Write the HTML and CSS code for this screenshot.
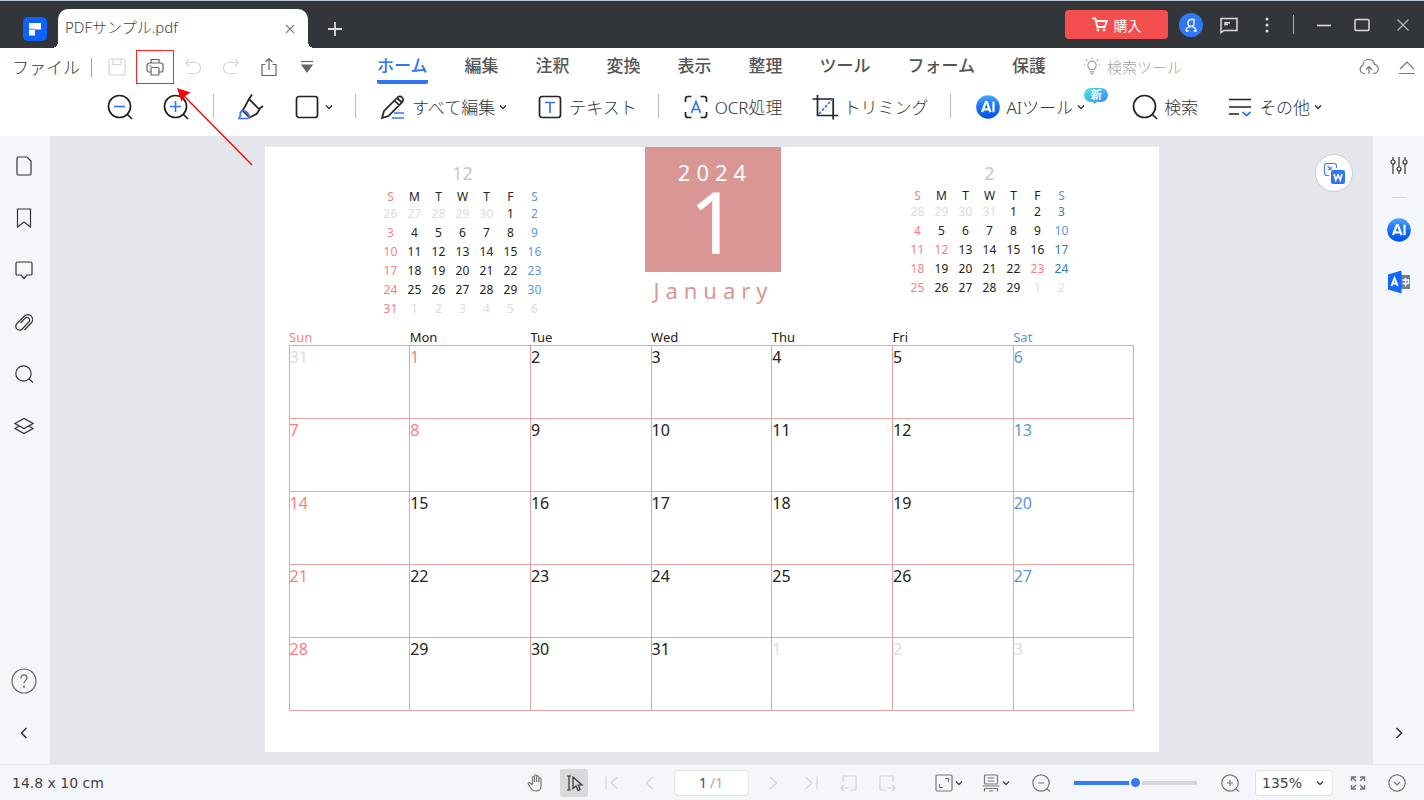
FILE: index.html
```html
<!DOCTYPE html>
<html lang="ja">
<head>
<meta charset="utf-8">
<meta name="viewport" content="width=device-width, initial-scale=1">
<title>PDFサンプル.pdf</title>
<link rel="stylesheet" href="styles.css">
</head>
<body>
<svg width="0" height="0" class="defs" aria-hidden="true">
  <defs>
    <linearGradient id="ai-fill" x1="0" y1="0" x2="0" y2="1"><stop offset="0" stop-color="#46a6fb"/><stop offset=".5" stop-color="#1a6ff5"/><stop offset="1" stop-color="#0052e6"/></linearGradient>
    <linearGradient id="new-fill" x1="0" y1="0" x2="1" y2="1"><stop offset="0" stop-color="#5be6dc"/><stop offset="1" stop-color="#2c83f8"/></linearGradient>
    <symbol id="chev" viewBox="0 0 10 10"><path d="M2 3.5l3 3 3-3"/></symbol>
    <symbol id="ai" viewBox="0 0 24 24"><circle cx="12" cy="12" r="11.8" fill="url(#ai-fill)" stroke="none"/><path d="M6 17.200L9.800 7h1l3.800 10.200M7.200 14.300h6M17.500 6.800v10.400" stroke="#fff" stroke-width="2.2"/></symbol>
  </defs>
</svg>

<header class="titlebar">
  <svg class="logo" viewBox="0 0 24 24" aria-hidden="true"><rect width="24" height="24" rx="5" fill="#0a62ff" stroke="none"/><path fill="#fff" stroke="none" d="M6 6h12v6.500h-6v6H6z"/><path d="M6 12.200h6" stroke="#0a62ff" stroke-width=".8"/></svg>
  <div class="doc-tab">
    <span>PDFサンプル.pdf</span>
    <button class="icon-btn tab-close" aria-label="タブを閉じる"><svg viewBox="0 0 10 10" width="10" height="10"><path d="M1 1l8 8M9 1l-8 8"/></svg></button>
  </div>
  <button class="icon-btn add-tab" aria-label="新しいタブ"><svg viewBox="0 0 14 14" width="14" height="14"><path d="M7 0v14M0 7h14" stroke-width="1.800"/></svg></button>
  <div class="window-tools">
    <button class="buy"><svg viewBox="0 0 16 16" width="16" height="16"><path d="M.5 1.500h2.800l2 8.500h7.500l1.900-6H4.200" stroke-width="1.800"/><circle cx="6" cy="13" r="1.400" fill="currentColor" stroke="none"/><circle cx="12" cy="13" r="1.400" fill="currentColor" stroke="none"/></svg>購入</button>
    <button class="avatar" aria-label="アカウント"><svg viewBox="0 0 16 16" width="16" height="16"><path d="M5 4.500l2-2h4v3.800a3 3 0 01-6 0zM3 14c.2-3 2-4.300 5-4.300s4.800 1.300 5 4.300h-2.500M3 14h2.500" stroke-width="1.300"/></svg></button>
    <button class="icon-btn" aria-label="メッセージ"><svg viewBox="0 0 18 18" width="18" height="18"><path d="M1 16.500V2.500h16v12H4zM5 9.500V6.700h5M5 8.500h3" stroke-width="1.500"/></svg></button>
    <button class="icon-btn" aria-label="メニュー"><svg viewBox="0 0 18 18" width="18" height="18"><g fill="currentColor" stroke="none"><circle cx="9" cy="3" r="1.500"/><circle cx="9" cy="9" r="1.500"/><circle cx="9" cy="15" r="1.500"/></g></svg></button>
    <span class="bar"></span>
    <button class="icon-btn" aria-label="最小化"><svg viewBox="0 0 18 18" width="18" height="18"><path d="M2 9.500h14" stroke-width="1.600"/></svg></button>
    <button class="icon-btn" aria-label="最大化"><svg viewBox="0 0 18 18" width="18" height="18"><rect x="2" y="3.500" width="14" height="11" rx="1" stroke-width="1.500"/></svg></button>
    <button class="icon-btn win-close" aria-label="閉じる"><svg viewBox="0 0 18 18" width="18" height="18"><path d="M3.500 3.500l11 11M14.500 3.500l-11 11"/></svg></button>
  </div>
</header>

<nav class="menubar">
  <button class="file-menu">ファイル</button>
  <span class="bar"></span>
  <div class="quick">
    <button class="quick-btn off" aria-label="保存"><svg viewBox="0 0 18 18" width="18" height="18"><rect x="1" y="1" width="16" height="16" rx="2"/><path d="M5 1v5.500h8V1M9.500 3h1"/></svg></button>
    <button class="quick-btn marked" aria-label="印刷"><svg viewBox="0 0 18 18" width="18" height="18"><path d="M5 5V1.500h8V5M5 14H3a2 2 0 01-2-2V7.500A2.500 2.500 0 013.500 5h11A2.500 2.500 0 0117 7.500V12a2 2 0 01-2 2h-2M3.500 8h2"/><rect x="5" y="9.500" width="8" height="7.500" rx="1"/></svg>
      <svg class="arrow" viewBox="0 0 76 78" width="76" height="78" aria-hidden="true"><path d="M75 77L6 7" stroke="#f00" stroke-width="1.400"/><path d="M0 0l13.500 4.500-5.500 3.500-3.500 5.500z" fill="#f00" stroke="none"/></svg></button>
    <button class="quick-btn off" aria-label="元に戻す"><svg viewBox="0 0 18 18" width="18" height="18"><path d="M5 1L1.500 4.500 5 8M1.500 4.500H11a5.500 5.500 0 010 11H4"/></svg></button>
    <button class="quick-btn off" aria-label="やり直し"><svg viewBox="0 0 18 18" width="18" height="18"><path d="M13 1l3.500 3.500L13 8M16.500 4.500H7a5.500 5.500 0 000 11h7"/></svg></button>
    <button class="quick-btn" aria-label="共有"><svg viewBox="0 0 18 18" width="18" height="18"><path d="M5.500 6.500H2v11h14v-11h-3.500M9 12V1M5.500 4L9 .7 12.500 4"/></svg></button>
    <button class="quick-btn" aria-label="カスタマイズ"><svg viewBox="0 0 18 18" width="18" height="18"><path d="M3 3.500h12"/><path d="M4 7h10l-5 7z" fill="currentColor"/></svg></button>
  </div>
  <div class="tabs">
    <a href="#home" class="active">ホーム</a><a href="#edit">編集</a><a href="#comment">注釈</a><a href="#convert">変換</a><a href="#view">表示</a><a href="#organize">整理</a><a href="#tools">ツール</a><a href="#form">フォーム</a><a href="#protect">保護</a>
  </div>
  <button class="find-tool"><svg viewBox="0 0 18 18" width="18" height="18"><path d="M6.500 12.500c0-1.500-1.700-2-1.700-4.200a4.200 4.200 0 018.400 0c0 2.200-1.700 2.700-1.700 4.200zM6.500 14.800h5M7.500 16.800h3M9 .5v1.500M1 8h1.500M15.500 8H17M3 2.500l1.300 1.300M15 2.500l-1.300 1.300"/></svg>検索ツール</button>
  <div class="menubar-end">
    <button class="icon-btn" aria-label="クラウド"><svg viewBox="0 0 20 18" width="20" height="18"><path d="M6 15.500H5a4.300 4.300 0 01-1-8.300C4 3.800 6.500 1.500 9.700 1.500c3 0 5.300 2 5.800 4.800 2.200.5 3.700 2.200 3.700 4.500a4.700 4.700 0 01-4.500 4.700H14M10 16V9M7 11.500L10 8.500l3 3"/></svg></button>
    <button class="icon-btn" aria-label="折りたたむ"><svg viewBox="0 0 18 18" width="18" height="18"><path d="M2 11l7-7 7 7M1 15.500h16"/></svg></button>
  </div>
</nav>

<div class="toolbar" role="toolbar">
  <div class="group">
    <button class="tool" aria-label="縮小"><svg viewBox="0 0 28 28"><circle cx="13.500" cy="13.500" r="11"/><path d="M21 21l5 5"/><path class="blue" d="M8 13.500h11"/></svg></button>
    <button class="tool" aria-label="拡大"><svg viewBox="0 0 28 28"><circle cx="13.500" cy="13.500" r="11"/><path d="M21 21l5 5"/><path class="blue" d="M8 13.500h11M13.500 8v11"/></svg></button>
  </div>
  <div class="group after-zoom">
    <button class="tool" aria-label="ハイライト"><svg viewBox="0 0 28 28"><path d="M15 1.500l-3 4.500M26 13l-4 3M12 6l-4 7.500-2.500 4 7 7L19.500 21l3-4.500zM12 6l10.500 10.500"/><path class="blue" d="M5.500 17.500c-1.500 1-3 2.500-2 4.500l-1.500 3.500h8l2.500-1c-.5-4-3-6.500-7-7z"/></svg></button>
    <button class="tool" aria-label="図形"><svg viewBox="0 0 28 28"><rect x="3.500" y="3.500" width="21" height="21" rx="2.500"/></svg><svg class="chev"><use href="#chev"/></svg></button>
  </div>
  <div class="group">
    <button class="tool"><svg viewBox="0 0 28 28"><path d="M3 25l2-7L18.500 4.500a3.200 3.200 0 014.700 0 3.200 3.200 0 010 4.600L9.500 23zM15.500 7.500l5 5M18 5l5 4.500"/><path class="blue" d="M15 20h10M13 25h12"/></svg>すべて編集<svg class="chev"><use href="#chev"/></svg></button>
    <button class="tool"><svg viewBox="0 0 28 28"><rect x="3.500" y="3.500" width="21" height="21" rx="2.500"/><path class="blue" d="M9 9.500h10M14 9.500V20"/></svg>テキスト</button>
  </div>
  <div class="group">
    <button class="tool"><svg viewBox="0 0 28 28"><path d="M3.500 9V6A2.500 2.500 0 016 3.500h3.500M18.500 3.500H22A2.500 2.500 0 0124.500 6v3M24.500 19v3a2.500 2.500 0 01-2.500 2.500h-3.500M9.500 24.500H6A2.500 2.500 0 013.500 22v-3"/><path class="blue" d="M9.500 20L14 8.500 18.500 20M11 16.500h6"/></svg>OCR処理</button>
    <button class="tool"><svg viewBox="0 0 28 28"><path d="M6.500 2v20.500H27M1.500 6h20.700v20.500"/><path class="blue" stroke-dasharray="3 1.500" d="M8 21L22 5.500"/></svg>トリミング</button>
  </div>
  <div class="group">
    <button class="tool"><svg viewBox="-2 -2 28 28"><use href="#ai" width="24" height="24"/></svg>AIツール<svg class="chev"><use href="#chev"/></svg><span class="new"><svg viewBox="0 0 24 18" aria-hidden="true"><path fill="url(#new-fill)" stroke="none" d="M7 1h10a7 7 0 010 14h-4l-2.500 2L9 15H7A7 7 0 017 1z"/></svg><b>新</b></span></button>
    <button class="tool"><svg viewBox="0 0 28 28"><circle cx="13.500" cy="13.500" r="11"/><path d="M21 21l5 5"/></svg>検索</button>
    <button class="tool"><svg viewBox="0 0 28 28"><path d="M3 6.500h22M3 14h22M3 21h10"/><path class="blue" d="M16.500 19l4 3.500 4-3.500"/></svg>その他<svg class="chev"><use href="#chev"/></svg></button>
  </div>
</div>

<main class="body">
  <aside class="rail">
    <button class="icon-btn" aria-label="サムネイル"><svg viewBox="0 0 20 20"><path d="M4.500 1h8.500l4 4v12.500a1.500 1.500 0 01-1.500 1.500h-11A1.500 1.500 0 013 17.500v-15A1.500 1.500 0 014.500 1z"/></svg></button>
    <button class="icon-btn" aria-label="ブックマーク"><svg viewBox="0 0 20 20"><path d="M3.500 1h13v18L10 14l-6.500 5z"/></svg></button>
    <button class="icon-btn" aria-label="コメント"><svg viewBox="0 0 20 20"><path d="M3.500 2h13A1.500 1.500 0 0118 3.500V14a1 1 0 01-1 1h-4l-3 3.500L7 15H3a1 1 0 01-1-1V3.500A1.500 1.500 0 013.500 2z"/></svg></button>
    <button class="icon-btn" aria-label="添付ファイル"><svg viewBox="0 0 20 20"><path d="M10.500 18l6.700-7a5 5 0 00.300-6.700 4.800 4.800 0 00-7-.3L3 11.500a4 4 0 00-.2 5.300 3.800 3.800 0 005.500.2l6.500-7a2.600 2.600 0 00-3.600-3.800L6.500 11"/></svg></button>
    <button class="icon-btn" aria-label="検索"><svg viewBox="0 0 20 20"><circle cx="9.500" cy="9.500" r="7.700"/><path d="M15 15l4 3.500"/></svg></button>
    <button class="icon-btn" aria-label="レイヤー"><svg viewBox="0 0 20 20"><path d="M1 7.500l9-5 9 5-9 5zM5 10l-4 2.500 9 5 9-5-4-2.500"/></svg></button>
    <span class="push"></span>
    <button class="icon-btn help" aria-label="ヘルプ"><svg viewBox="0 0 26 26" width="26" height="26"><circle cx="13" cy="13" r="12"/><path d="M10 10.500V9.800a3 3 0 016 0c0 2.500-3 2.700-3 5.500"/><circle cx="13" cy="18.700" r="1" fill="currentColor" stroke="none"/></svg></button>
    <button class="icon-btn" aria-label="パネルを隠す"><svg viewBox="0 0 20 20"><path d="M12.500 5l-5 5 5 5" stroke-width="1.500"/></svg></button>
  </aside>

  <section class="workspace">
    <article class="page">
      <div class="page-head">
        <table class="mini mini-prev"><caption>12</caption>
          <thead><tr><th>S</th><th>M</th><th>T</th><th>W</th><th>T</th><th>F</th><th>S</th></tr></thead>
          <tbody>
          <tr><td class="dim">26</td><td class="dim">27</td><td class="dim">28</td><td class="dim">29</td><td class="dim">30</td><td>1</td><td>2</td></tr>
          <tr><td>3</td><td>4</td><td>5</td><td>6</td><td>7</td><td>8</td><td>9</td></tr>
          <tr><td>10</td><td>11</td><td>12</td><td>13</td><td>14</td><td>15</td><td>16</td></tr>
          <tr><td>17</td><td>18</td><td>19</td><td>20</td><td>21</td><td>22</td><td>23</td></tr>
          <tr><td>24</td><td>25</td><td>26</td><td>27</td><td>28</td><td>29</td><td>30</td></tr>
          <tr><td>31</td><td class="dim">1</td><td class="dim">2</td><td class="dim">3</td><td class="dim">4</td><td class="dim">5</td><td class="dim">6</td></tr>
          </tbody></table>
        <div class="month">
          <div class="month-box"><div class="year">2024</div><div class="num">1</div></div>
          <div class="month-name">January</div>
        </div>
        <table class="mini mini-next"><caption>2</caption>
          <thead><tr><th>S</th><th>M</th><th>T</th><th>W</th><th>T</th><th>F</th><th>S</th></tr></thead>
          <tbody>
          <tr><td class="dim">28</td><td class="dim">29</td><td class="dim">30</td><td class="dim">31</td><td>1</td><td>2</td><td class="deep">3</td></tr>
          <tr><td>4</td><td>5</td><td>6</td><td>7</td><td>8</td><td>9</td><td>10</td></tr>
          <tr><td>11</td><td class="red">12</td><td>13</td><td>14</td><td>15</td><td>16</td><td class="deep">17</td></tr>
          <tr><td>18</td><td>19</td><td>20</td><td>21</td><td>22</td><td class="red">23</td><td class="deep">24</td></tr>
          <tr><td>25</td><td>26</td><td>27</td><td>28</td><td>29</td><td class="dim">1</td><td class="dim">2</td></tr>
          </tbody></table>
      </div>
      <table class="big">
        <thead><tr><th>Sun</th><th>Mon</th><th>Tue</th><th>Wed</th><th>Thu</th><th>Fri</th><th>Sat</th></tr></thead>
        <tbody>
        <tr><td class="dim">31</td><td class="red">1</td><td>2</td><td>3</td><td>4</td><td>5</td><td>6</td></tr>
        <tr><td>7</td><td class="red">8</td><td>9</td><td>10</td><td>11</td><td>12</td><td>13</td></tr>
        <tr><td>14</td><td>15</td><td>16</td><td>17</td><td>18</td><td>19</td><td>20</td></tr>
        <tr><td>21</td><td>22</td><td>23</td><td>24</td><td>25</td><td>26</td><td>27</td></tr>
        <tr><td>28</td><td>29</td><td>30</td><td>31</td><td class="dim">1</td><td class="dim">2</td><td class="dim">3</td></tr>
        </tbody>
      </table>
    </article>
    <button class="to-word" aria-label="Wordに変換"><svg viewBox="0 0 24 24" width="24" height="24"><path d="M7 14.500H5A2.500 2.500 0 012.500 12V5A2.500 2.500 0 015 2.500h7A2.500 2.500 0 0114.500 5v2M5.500 5l3.500 3.500M9 5.500v3H6" stroke="#3f7df6" stroke-width="1.200"/><rect x="9" y="9" width="14" height="14" rx="2" fill="#2f74f5" stroke="none"/><path d="M12 13l1.800 6L16 14l2.200 5L20 13" stroke="#fff" stroke-width="1.700"/></svg></button>
  </section>

  <aside class="rail rail-right">
    <button class="icon-btn" aria-label="設定"><svg viewBox="0 0 20 20"><path d="M4 1v3M4 8v10M10 1v10M10 15v3M16 1v3M16 8v10"/><circle cx="4" cy="6" r="2"/><circle cx="10" cy="13" r="2"/><circle cx="16" cy="6" r="2"/></svg></button>
    <span class="dash"></span>
    <button class="icon-btn" aria-label="AI"><svg class="large" viewBox="0 0 24 24"><use href="#ai"/></svg></button>
    <button class="icon-btn" aria-label="翻訳"><svg class="large" viewBox="0 0 24 24"><path fill="#6f7f96" stroke="none" d="M12 5h11v14H12z"/><path fill="#1268fa" stroke="none" d="M1 4.500L14.500.5v23L1 19.500z"/><path d="M4.500 16L7.500 8l3.300 8M5.500 13.500h4" stroke="#fff" stroke-width="1.800"/><path d="M15.500 10h6v3.500h-6M18.500 8v8.500" stroke="#fff" stroke-width="1.400"/></svg></button>
    <span class="push"></span>
    <button class="icon-btn" aria-label="パネルを開く"><svg viewBox="0 0 20 20"><path d="M7.500 5l5 5-5 5" stroke-width="1.500"/></svg></button>
  </aside>
</main>

<footer class="status">
  <span class="size">14.8 x 10 cm</span>
  <div class="pager">
    <button class="icon-btn" aria-label="手のひら"><svg viewBox="0 0 20 20"><path d="M6.500 11V4.500c0-1.700 2-1.700 2 0V9 3c0-1.700 2.200-1.700 2.200 0v6-5c0-1.700 2.200-1.700 2.200 0v5.500V6c0-1.700 2.100-1.700 2.100 0v6.500c0 3.500-2 5.500-5 5.500-3.500 0-4.500-1.500-7.500-6.500-1-1.700 1-2.300 2-1.200L6.500 12"/></svg></button>
    <button class="icon-btn selected" aria-label="選択"><svg viewBox="0 0 20 20"><path d="M3 3h4M3 17h4M5 3v14M9 4v11.500l3-2.500 2 4.500 2.200-1-2-4.500H18z"/></svg></button>
    <button class="icon-btn off" aria-label="最初のページ"><svg viewBox="0 0 20 20"><path d="M4 3.500v13M15.500 4l-6.500 6 6.500 6"/></svg></button>
    <button class="icon-btn off" aria-label="前のページ"><svg viewBox="0 0 20 20"><path d="M13 4l-6.500 6 6.500 6"/></svg></button>
    <label class="page-box"><input type="text" value="1" aria-label="ページ"><span>/1</span></label>
    <button class="icon-btn off" aria-label="次のページ"><svg viewBox="0 0 20 20"><path d="M7 4l6.500 6-6.500 6"/></svg></button>
    <button class="icon-btn off" aria-label="最後のページ"><svg viewBox="0 0 20 20"><path d="M16 3.500v13M4.500 4l6.500 6-6.500 6"/></svg></button>
    <button class="icon-btn off" aria-label="前のビュー"><svg viewBox="0 0 20 20"><path d="M4 9V3h13v14h-6M9 15H2M5 12l-3 3 3 3"/></svg></button>
    <button class="icon-btn off" aria-label="次のビュー"><svg viewBox="0 0 20 20"><path d="M16 9V3H3v14h6M11 15h7M15 12l3 3-3 3"/></svg></button>
  </div>
  <div class="zoomer">
    <button class="icon-btn drop" aria-label="ページに合わせる"><svg viewBox="0 0 20 20"><rect x="2" y="2" width="16" height="16" rx="1.500"/><path d="M11 5.500h3.500V9M5.500 11v3.500H9"/></svg><svg class="chev"><use href="#chev"/></svg></button>
    <button class="icon-btn drop" aria-label="表示モード"><svg viewBox="0 0 20 20"><rect x="3.500" y="2" width="13" height="9" rx="1"/><path d="M6.500 5h7M6.500 8h7M1.500 13h17M3.500 18.500v-3h13v3M8 18h4"/></svg><svg class="chev"><use href="#chev"/></svg></button>
    <button class="icon-btn" aria-label="縮小"><svg viewBox="0 0 20 20"><circle cx="10" cy="10" r="8.200"/><path d="M7 10h6M15.500 15.500l3.500 3"/></svg></button>
    <input class="slider" type="range" min="0" max="100" value="50" aria-label="ズーム">
    <button class="icon-btn" aria-label="拡大"><svg viewBox="0 0 20 20"><circle cx="10" cy="10" r="8.200"/><path d="M7 10h6M10 7v6M15.500 15.500l3.500 3"/></svg></button>
    <label class="percent"><select aria-label="倍率"><option>135%</option></select><svg class="chev"><use href="#chev"/></svg></label>
    <button class="icon-btn" aria-label="全画面"><svg viewBox="0 0 20 20"><path d="M3.500 8V4H8M4 4l4 4M16.500 8V4H12M16 4l-4 4M3.500 12v4H8M4 16l4-4M16.500 12v4H12M16 16l-4-4" stroke-width="1.500"/></svg></button>
    <button class="icon-btn" aria-label="その他"><svg viewBox="0 0 20 20"><circle cx="10" cy="10" r="8.200"/><path d="M7 9l3 3 3-3"/></svg></button>
  </div>
</footer>
</body>
</html>
```

FILE: styles.css
```css
* { box-sizing: border-box; }

body {
  margin: 0;
  min-height: 100vh;
  display: flex;
  flex-direction: column;
  background: #fff;
  color: #333;
  font-family: "Noto Sans", "Noto Sans CJK JP", sans-serif;
  font-size: 17px;
}

button, input, select { font: inherit; color: inherit; }
button {
  border: 0;
  padding: 0;
  background: none;
  display: flex;
  align-items: center;
  white-space: nowrap;
}
a { color: inherit; text-decoration: none; }
svg {
  display: block;
  flex: none;
  fill: none;
  stroke: currentColor;
  stroke-width: 1.2;
}
.defs { position: absolute; }
.chev { width: 10px; height: 10px; stroke-width: 1.3; }
.icon-btn { width: 28px; height: 28px; justify-content: center; flex: none; }

/* title bar */
.titlebar {
  display: flex;
  align-items: center;
  height: 48px;
  padding: 0 7px 0 23px;
  background: #323639;
  border-top: 1px solid #b9c6d6;
  color: #dcdcdc;
}
.logo { width: 24px; height: 24px; margin: 8px 11px 0 0; }
.doc-tab {
  position: relative;
  align-self: flex-end;
  display: flex;
  align-items: center;
  justify-content: space-between;
  width: 250px;
  height: 39px;
  padding: 0 4px 4px 7px;
  border-radius: 10px 10px 0 0;
  background: #fff;
  color: #444;
  font-size: 15px;
  font-weight: 300;
}
.doc-tab::before, .doc-tab::after {
  content: "";
  position: absolute;
  bottom: 0;
  width: 6px;
  height: 6px;
}
.doc-tab::before { right: 100%; background: radial-gradient(circle at 0 0, transparent 6px, #fff 6px); }
.doc-tab::after { left: 100%; background: radial-gradient(circle at 100% 0, transparent 6px, #fff 6px); }
.tab-close { color: #77809a; margin-top: 4px; }
.add-tab { margin: 8px 0 0 13px; }
.window-tools { display: flex; align-items: center; gap: 10px; margin-left: auto; }
.buy {
  width: 103px;
  height: 29px;
  gap: 6px;
  margin-right: 1px;
  justify-content: center;
  border-radius: 4px;
  background: #f54e4e;
  color: #fff;
  font-size: 14px;
}
.avatar { width: 24px; height: 24px; margin-right: 2px; border-radius: 50%; background: #2f78f7; color: #fff; justify-content: center; }
.window-tools .bar { height: 19px; margin: 0 6px 0 2px; }
.win-close { margin-left: 3px; color: #b4b8c2; }
.bar { width: 1px; background: #a5adc0; flex: none; }

/* menu row */
.menubar {
  display: flex;
  align-items: center;
  height: 38px;
  padding: 0 3px 0 12px;
}
.file-menu { color: #333; font-weight: 300; margin-bottom: 2px; }
.menubar > .bar { height: 19px; margin: 0 6px 0 11px; background: #9ba3bb; }
.quick { display: flex; }
.quick-btn {
  position: relative;
  width: 38px;
  height: 34px;
  justify-content: center;
  color: #666;
}
.off { color: #d2d4d8; }
.marked { border: 1px solid #f22; }
.arrow { position: absolute; left: 40px; top: 37px; z-index: 2; }
.tabs { display: flex; align-self: stretch; gap: 37px; margin-left: 51px; }
.tabs a {
  display: flex;
  align-items: center;
  height: 36px;
  border-bottom: 4px solid transparent;
  color: #555;
  font-weight: 500;
  white-space: nowrap;
}
.tabs .active { color: #2f74f5; border-bottom-color: #2f74f5; border-radius: 0 0 2px 2px; }
.find-tool { gap: 6px; margin: 0 0 2px 37px; color: #a3a3a3; font-size: 15px; font-weight: 300; }
.menubar-end { display: flex; gap: 10px; margin-left: auto; color: #777; }

/* tool row */
.toolbar {
  display: flex;
  align-items: center;
  height: 50px;
  padding: 0 0 10px 106px;
  color: #333;
  font-weight: 300;
}
.group { display: flex; gap: 28px; align-items: center; }
.group + .group {
  padding-left: 24px;
  margin-left: 21px;
  background: linear-gradient(#bbb, #bbb) left center / 1px 24px no-repeat;
}
.group + .after-zoom { margin-left: 23px; }
.tool > svg:first-child { width: 28px; height: 28px; margin: 2px 5px 0 0; stroke: #222; stroke-width: 1.7; }
.tool[aria-label] > svg:first-child { margin-right: 0; }
.tool .blue { stroke: #3775f6; }
.tool .chev { margin: 2px 0 0 3px; }
.new { position: relative; width: 24px; height: 18px; margin: 0 -5px 20px -2px; }
.new svg { width: 24px; height: 18px; }
.new b {
  position: absolute;
  inset: 0;
  color: #fff;
  font-size: 11px;
  font-weight: 700;
  line-height: 16px;
  text-align: center;
}

/* body */
.body { flex: 1; display: flex; }
.rail {
  display: flex;
  flex-direction: column;
  align-items: center;
  gap: 24px;
  width: 51px;
  padding: 16px 3px 17px 0;
  background: #f5f6fa;
  border-right: 1px solid #e2e4ea;
  color: #333;
}
.rail svg { width: 20px; height: 20px; }
.rail .help svg { width: 26px; height: 26px; color: #666; }
.rail .large { width: 24px; height: 24px; }
.rail-right { padding-right: 0; border-right: 0; }
.push { flex: 1; margin-top: -24px; }
.dash { width: 14px; height: 1px; margin: -7px 0 -6px; background: #d0d3da; }
.workspace {
  position: relative;
  flex: 1;
  display: flex;
  justify-content: center;
  align-items: flex-start;
  padding: 11px 0 12px;
  background: #e5e6ea;
}
.page {
  width: 67.7%;
  min-width: 760px;
  padding: 0 25px 41px 24px;
  background: #fff;
  color: #222;
}
.to-word {
  position: absolute;
  top: 18px;
  right: 20px;
  width: 38px;
  height: 38px;
  justify-content: center;
  border: 1px solid #c8cedf;
  border-radius: 50%;
  background: #fff;
}

/* calendar */
.page-head {
  display: grid;
  grid-template-columns: 90fr 168px 99fr 136px 124fr 168px 61fr;
  align-items: start;
  height: 182px;
}
.mini {
  width: 168px;
  margin-top: 14px;
  border-collapse: collapse;
  table-layout: fixed;
  font-size: 12px;
  line-height: 17px;
  text-align: center;
}
.mini caption { color: #c8c8c8; font-size: 18px; line-height: 24px; padding-bottom: 3px; }
.mini th, .big th { font-weight: 400; }
.mini th, .mini td { padding: 0 0 2px; }
.mini th { padding: 0; }
.mini-next th, .mini-next td { line-height: 16px; }
.mini-prev { grid-column: 2; }
.month { grid-column: 4; text-align: center; }
.mini-next { grid-column: 6; height: 110px; }
.month-box { height: 125px; padding-top: 11px; background: #d99694; color: #fff; }
.year { font-size: 22px; line-height: 28px; letter-spacing: 6px; padding-left: 3px; }
.num { font-size: 86px; line-height: 70px; }
.month-name { color: #d99694; font-size: 22px; line-height: 36px; letter-spacing: 6px; }
tr > :first-child, .red { color: #fa7f7f; }
tr > :last-child { color: #5e97d8; }
tr > .deep { color: #2f78cc; }
tr > .dim { color: #dcdcdc; }
tr > .red { color: #fa7f7f; }
.big {
  width: 100%;
  border-collapse: collapse;
  table-layout: fixed;
  text-align: left;
  font-size: 16px;
}
.big th { height: 16px; padding: 0; font-size: 13px; line-height: 16px; }
.big td {
  height: 73px;
  padding: 0;
  border: 1px solid #e2a3a2;
  line-height: 22px;
  vertical-align: top;
}

/* status bar */
.status {
  display: flex;
  align-items: center;
  height: 36px;
  padding: 0 13px 0 12px;
  background: #f5f6fa;
  border-top: 1px solid #e6e8ec;
  color: #777;
  font-size: 15px;
}
.size { color: #444; font-family: "DejaVu Sans", sans-serif; font-size: 14px; }
.status svg:not(.chev) { width: 20px; height: 20px; }
.pager { display: flex; align-items: center; gap: 10px; margin-left: auto; }
.zoomer { display: flex; align-items: center; gap: 11px; margin-left: 32px; }
.selected { background: #d8d9db; color: #333; border-radius: 2px; }
.page-box, .percent {
  display: flex;
  align-items: center;
  height: 26px;
  border: 1px solid #dfe1e6;
  border-radius: 4px;
  background: #fff;
}
.page-box { width: 75px; color: #aaa; font-size: 14px; gap: 3px; }
.page-box input { width: 32px; padding: 0; border: 0; background: none; color: #3c4468; text-align: right; }
.drop { width: 31px; margin-right: 5px; }
.drop .chev { color: #444; }
.slider {
  appearance: none;
  width: 123px;
  height: 13px;
  margin: 0 8px;
  background: linear-gradient(90deg, #3579f8 50%, #d0d5df 50%) center / 100% 4px no-repeat;
}
.slider::-webkit-slider-thumb {
  appearance: none;
  width: 13px;
  height: 13px;
  border: 2px solid #f5f6fa;
  border-radius: 50%;
  background: #3579f8;
}
.percent { width: 78px; padding: 0 7px 0 6px; color: #444; font-family: "DejaVu Sans", sans-serif; font-size: 14px; }
.percent select { appearance: none; flex: 1; width: 50px; padding: 0; border: 0; background: none; }
```
